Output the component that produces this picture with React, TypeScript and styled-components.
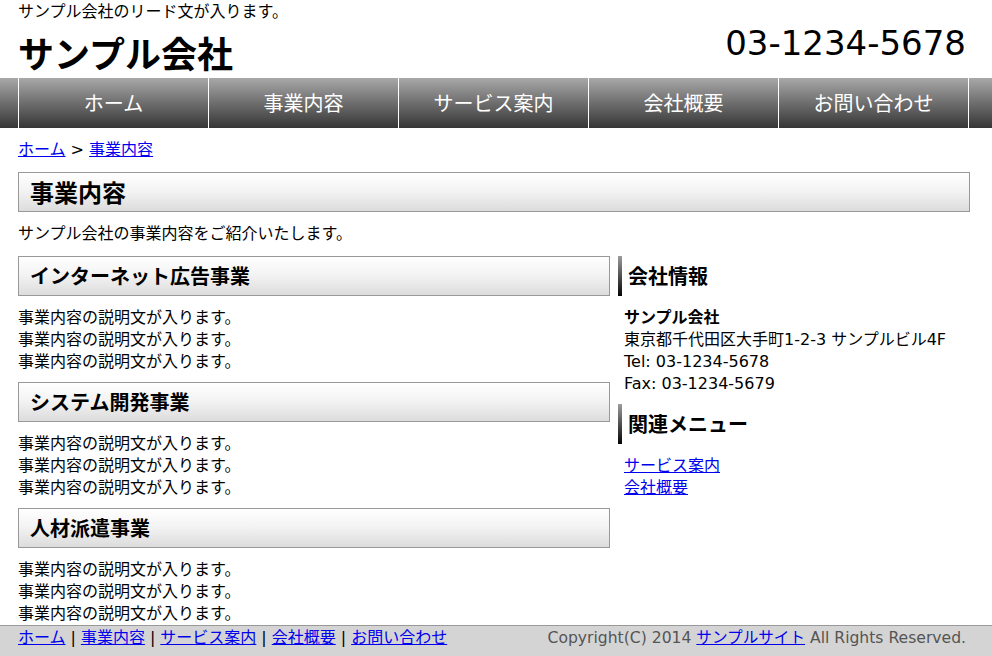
import React from "react";
import styled, { createGlobalStyle } from "styled-components";

const Global = createGlobalStyle`
  html, body { margin: 0; padding: 0; background: #fff; }
  body {
    font-family: "DejaVu Sans", "Noto Sans CJK JP", sans-serif;
    font-size: 16px;
    line-height: 22px;
    color: #000;
  }
  a { color: #0000ee; text-decoration: underline; }
`;

const Page = styled.div`
  width: 992px;
  height: 656px;
  overflow: hidden;
  display: flex;
  flex-direction: column;
  & > * { flex-shrink: 0; }
`;

const Inner = styled.div`
  width: 952px;
  margin-left: 18px;
`;

const Header = styled(Inner)`
  display: flex;
  justify-content: space-between;
  align-items: flex-start;
  height: 78px;
`;

const Lead = styled.p`
  margin: 0;
  font-size: 16px;
  line-height: 24px;
`;

const Logo = styled.h1`
  margin: 4px 0 0;
  font-size: 36px;
  line-height: 48px;
  font-weight: bold;
  font-family: "Noto Sans CJK JP", sans-serif;
`;

const Phone = styled.div`
  margin-top: 21px;
  margin-right: 4px;
  font-size: 34px;
  line-height: 44px;
`;

const NavBar = styled.nav`
  height: 50px;
  background: linear-gradient(to bottom, #a8a8a8 0%, #6e6e6e 50%, #363636 100%);
`;

const NavList = styled.ul`
  list-style: none;
  margin: 0 0 0 18px;
  padding: 0;
  display: flex;
  height: 50px;
`;

const NavItem = styled.li<{ $last?: boolean }>`
  width: 189px;
  border-left: 1px solid #fff;
  border-right: ${(p) => (p.$last ? "1px solid #fff" : "none")};
  display: flex;
  align-items: center;
  justify-content: center;
  color: #fff;
  font-size: 20px;
  font-family: "Noto Sans CJK JP", sans-serif;
`;

const Main = styled(Inner)`
  flex: 1 0 auto;
`;

const Breadcrumb = styled.div`
  margin-top: 11px;
`;

const PageTitle = styled.h1`
  margin: 11px 0 0;
  height: 38px;
  border: 1px solid #999;
  background: linear-gradient(to bottom, #ffffff 0%, #f2f2f2 50%, #dcdcdc 100%);
  padding-left: 11px;
  font-size: 24px;
  line-height: 38px;
  font-weight: bold;
  font-family: "Noto Sans CJK JP", sans-serif;
`;

const Intro = styled.p`
  margin: 11px 0 0;
`;

const Columns = styled.div`
  display: flex;
  gap: 8px;
  margin-top: 11px;
`;

const Content = styled.div`
  width: 592px;
`;

const Side = styled.div`
  flex: 1;
`;

const SectionTitle = styled.h2<{ $first?: boolean }>`
  margin: ${(p) => (p.$first ? "0" : "9px")} 0 0;
  height: 38px;
  border: 1px solid #999;
  background: linear-gradient(to bottom, #ffffff 0%, #f2f2f2 50%, #dcdcdc 100%);
  padding-left: 11px;
  font-size: 20px;
  line-height: 38px;
  font-weight: bold;
  font-family: "Noto Sans CJK JP", sans-serif;
`;

const SideTitle = styled.h2<{ $first?: boolean }>`
  margin: ${(p) => (p.$first ? "0" : "9px")} 0 0;
  height: 40px;
  border-left: 4px solid transparent;
  border-image: linear-gradient(to bottom, #a0a0a0, #000) 1;
  padding-left: 6px;
  font-size: 20px;
  line-height: 40px;
  font-weight: bold;
  font-family: "Noto Sans CJK JP", sans-serif;
`;

const Text = styled.div`
  margin-top: 11px;
`;

const SideText = styled.div`
  margin-top: 11px;
  padding-left: 6px;
`;

const Strong = styled.div`
  font-weight: bold;
`;

const LinkBlock = styled.a`
  display: block;
  width: fit-content;
`;

const Footer = styled.footer`
  border-top: 1px solid #999;
  background: #d4d4d4;
  height: 31px;
`;

const FooterInner = styled(Inner)`
  display: flex;
  justify-content: space-between;
  line-height: 22px;
  padding-top: 1px;
`;

const FooterLinks = styled.div``;

const Sep = styled.span`
  margin: 0 5px;
`;

const Copy = styled.div`
  color: #555;
  margin-right: 4px;
  font-size: 15.6px;
`;

const sections = ["インターネット広告事業", "システム開発事業", "人材派遣事業"];
const navs = ["ホーム", "事業内容", "サービス案内", "会社概要", "お問い合わせ"];

export default function App() {
  return (
    <Page>
      <Global />
      <Header>
        <div>
          <Lead>サンプル会社のリード文が入ります。</Lead>
          <Logo>サンプル会社</Logo>
        </div>
        <Phone>03-1234-5678</Phone>
      </Header>
      <NavBar>
        <NavList>
          {navs.map((n, i) => (
            <NavItem key={n} $last={i === navs.length - 1}>
              {n}
            </NavItem>
          ))}
        </NavList>
      </NavBar>
      <Main>
        <Breadcrumb>
          <a href="#">ホーム</a> &gt; <a href="#">事業内容</a>
        </Breadcrumb>
        <PageTitle>事業内容</PageTitle>
        <Intro>サンプル会社の事業内容をご紹介いたします。</Intro>
        <Columns>
          <Content>
            {sections.map((s, i) => (
              <React.Fragment key={s}>
                <SectionTitle $first={i === 0}>{s}</SectionTitle>
                <Text>
                  <div>事業内容の説明文が入ります。</div>
                  <div>事業内容の説明文が入ります。</div>
                  <div>事業内容の説明文が入ります。</div>
                </Text>
              </React.Fragment>
            ))}
          </Content>
          <Side>
            <SideTitle $first>会社情報</SideTitle>
            <SideText>
              <Strong>サンプル会社</Strong>
              <div>東京都千代田区大手町1-2-3 サンプルビル4F</div>
              <div>Tel: 03-1234-5678</div>
              <div>Fax: 03-1234-5679</div>
            </SideText>
            <SideTitle>関連メニュー</SideTitle>
            <SideText>
              <LinkBlock href="#">サービス案内</LinkBlock>
              <LinkBlock href="#">会社概要</LinkBlock>
            </SideText>
          </Side>
        </Columns>
      </Main>
      <Footer>
        <FooterInner>
          <FooterLinks>
            <a href="#">ホーム</a>
            <Sep>|</Sep>
            <a href="#">事業内容</a>
            <Sep>|</Sep>
            <a href="#">サービス案内</a>
            <Sep>|</Sep>
            <a href="#">会社概要</a>
            <Sep>|</Sep>
            <a href="#">お問い合わせ</a>
          </FooterLinks>
          <Copy>
            Copyright(C) 2014 <a href="#">サンプルサイト</a> All Rights Reserved.
          </Copy>
        </FooterInner>
      </Footer>
    </Page>
  );
}
